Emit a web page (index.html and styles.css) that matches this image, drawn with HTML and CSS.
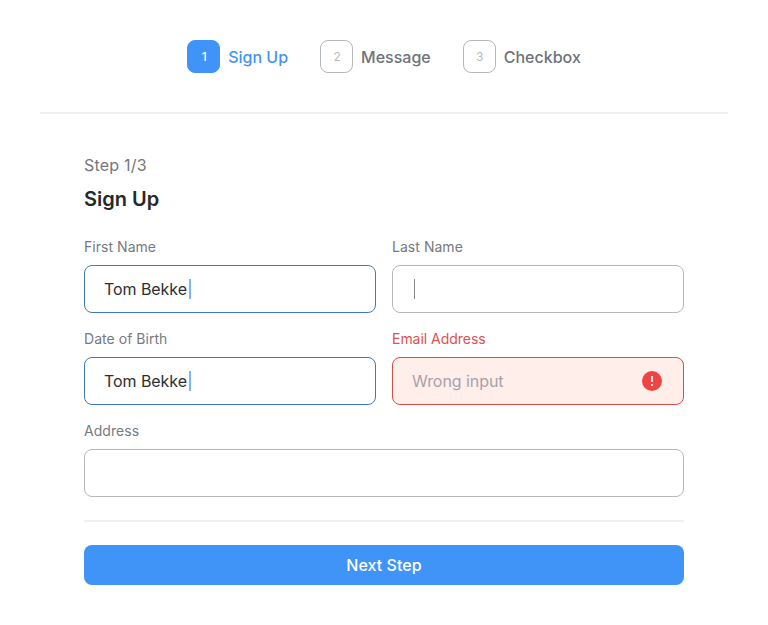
FILE: index.html
```html
<!DOCTYPE html>
<html lang="en">
<head>
<meta charset="utf-8">
<title>Sign Up</title>
<link rel="stylesheet" href="styles.css">
</head>
<body>
<nav class="steps">
  <div class="step active"><span class="num">1</span><span class="name">Sign Up</span></div>
  <div class="step"><span class="num">2</span><span class="name">Message</span></div>
  <div class="step"><span class="num">3</span><span class="name">Checkbox</span></div>
</nav>
<main class="form">
  <p class="progress">Step 1/3</p>
  <h1>Sign Up</h1>
  <div class="grid">
    <div class="field"><div class="label">First Name</div><div class="input filled"><span>Tom Bekke</span><i class="caret"></i></div></div>
    <div class="field"><div class="label">Last Name</div><div class="input"><i class="caret"></i></div></div>
    <div class="field"><div class="label">Date of Birth</div><div class="input filled"><span>Tom Bekke</span><i class="caret"></i></div></div>
    <div class="field error"><div class="label">Email Address</div><div class="input"><span>Wrong input</span>
      <svg class="alert" viewBox="0 0 20 20"><circle cx="10" cy="10" r="10" fill="#ef4444"/><path d="M10 5v6M10 13v2" stroke="#fff" stroke-width="1.7"/></svg></div></div>
    <div class="field wide"><div class="label">Address</div><div class="input"></div></div>
  </div>
  <div class="footer"><button>Next Step</button></div>
</main>
</body>
</html>
```
FILE: styles.css
```css
* { box-sizing: border-box; }
body { margin: 0; padding: 40px; background: #fff; color: #2c2f32; font-family: Inter, sans-serif; font-size: 16px; line-height: 24px; }
.steps { display: flex; justify-content: center; gap: 32px; height: 74px; border-bottom: 2px solid #f0f0f0; }
.step { display: flex; align-items: center; gap: 8px; height: 33px; color: #6e727a; font-weight: 500; }
.num { width: 33px; height: 33px; display: flex; align-items: center; justify-content: center; padding-left: 1px; border: 1px solid #b5b8bb; border-radius: 8px; color: #b9bbbe; font-size: 12px; font-weight: 400; }
.active { color: #4094f7; }
.active .num { background: #4094f7; border-color: #4094f7; color: #fff; font-weight: 500; }
.form { width: 600px; margin: 39px auto 0; }
.progress { margin: 0; color: #74787e; letter-spacing: .2px; }
h1 { margin: 7px 0 0; color: #25282b; font-size: 20px; line-height: 30px; font-weight: 600; }
.grid { display: grid; grid-template-columns: 1fr 1fr; gap: 16px; margin-top: 23px; }
.label { height: 20px; margin-bottom: 8px; font-size: 14px; line-height: 20px; color: #767a80; letter-spacing: .04px; }
.input { height: 48px; display: flex; align-items: center; padding: 0 21px 0 20px; border: 1px solid #b5b8bb; border-radius: 8px; }
.filled { padding-left: 19px; border-color: #3f78c4; letter-spacing: -.06px; }
.caret { width: 1px; height: 20px; margin-left: 1px; background: #85888c; }
.filled .caret { width: 2px; margin-left: 2.5px; background: #7db5f8; }
.error .label { color: #dc5151; letter-spacing: -.03px; }
.error .input { padding-left: 19px; background: #ffeeea; border-color: #d94c4c; color: #a6a3ad; letter-spacing: -.06px; }
.alert { width: 20px; height: 20px; margin-left: auto; }
.wide { grid-column: 1 / -1; }
.footer { margin-top: 23px; padding-top: 23px; border-top: 2px solid #f0f0f0; }
button { display: block; width: 100%; height: 40px; padding: 0; border: 0; border-radius: 8px; background: #4094f7; color: #fff; font: 500 16px/24px Inter, sans-serif; letter-spacing: .05px; }
```
